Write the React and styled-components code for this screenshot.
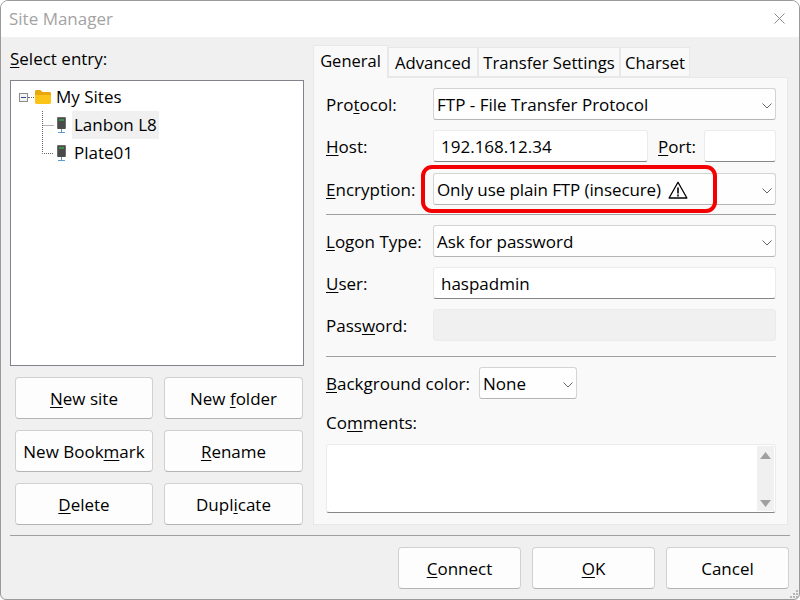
import React from 'react';
import styled, { createGlobalStyle } from 'styled-components';

const GlobalStyle = createGlobalStyle`
  html, body { margin: 0; padding: 0; background: #fff; }
  * { box-sizing: border-box; }
  u { text-underline-offset: 2px; text-decoration-thickness: 1px; }
`;

const Window = styled.div`
  position: relative;
  width: 800px;
  height: 600px;
  display: flex;
  flex-direction: column;
  overflow: hidden;
  background: #f0f0f0;
  border: 1px solid #9a9a9a;
  border-radius: 8px 8px 6px 6px;
  font-family: "Open Sans", "Noto Sans", sans-serif;
  font-size: 17px;
  color: #000;
`;

const TitleBar = styled.div`
  height: 36px;
  flex: none;
  display: flex;
  align-items: center;
  justify-content: space-between;
  padding: 0 14px 2px 8px;
  background: #fff;
  color: #a3a3a3;
  font-size: 17px;
`;

const Main = styled.div`
  display: flex;
  height: 488px;
  flex: none;
  padding-left: 9px;
`;

const LeftPane = styled.div`
  width: 294px;
  display: flex;
  flex-direction: column;
`;

const EntryLabel = styled.div`
  height: 43px;
  display: flex;
  align-items: center;
`;

const Tree = styled.div`
  height: 286px;
  padding: 2px 0 0 8px;
  background: #fff;
  border: 1px solid #82828c;
`;

const TreeRow = styled.div`
  height: 28px;
  display: flex;
  align-items: center;
  padding-left: ${(props) => props.$indent}px;
`;

const Expander = styled.span`
  width: 9px;
  height: 9px;
  display: flex;
  align-items: center;
  justify-content: center;
  background: #f4f4f4;
  border: 1px solid #8c8c8c;
  &::after {
    content: '';
    width: 5px;
    height: 1px;
    background: #2b4f9e;
  }
`;

const DotLine = styled.span`
  width: 6px;
  margin-right: 1px;
  border-top: 1px dotted #666;
`;

const EntryName = styled.span`
  height: 28px;
  line-height: 27px;
  margin-left: ${(props) => props.$gap}px;
  padding: 0 2px;
  background: ${(props) => (props.$selected ? '#f0f0f0' : 'transparent')};
`;

const ButtonGrid = styled.div`
  display: grid;
  grid-template-columns: 138px 139px;
  grid-auto-rows: 42px;
  gap: 11px;
  margin-top: 11px;
  padding-left: 5px;
`;

const PushButton = styled.div`
  display: flex;
  align-items: center;
  justify-content: center;
  background: #fdfdfd;
  border: 1px solid #d0d0d0;
  border-bottom-color: #b4b4b4;
  border-radius: 4px;
  white-space: nowrap;
`;

const RightPane = styled.div`
  width: 475px;
  margin-left: 9px;
  display: flex;
  flex-direction: column;
`;

const TabStrip = styled.div`
  height: 40px;
  flex: none;
  display: flex;
  align-items: flex-end;
`;

const Tab = styled.div`
  width: ${(props) => props.$width}px;
  height: ${(props) => (props.$active ? 33 : 30)}px;
  display: flex;
  align-items: center;
  justify-content: center;
  padding: ${(props) => (props.$active ? '0 0 4px' : '1px 0 0')};
  margin-bottom: ${(props) => (props.$active ? -1 : 0)}px;
  background: #f9f9f9;
  border: 1px solid #e8e8e8;
  border-bottom: ${(props) => (props.$active ? 'none' : '1px solid #e8e8e8')};
  position: relative;
  font-size: ${(props) => (props.$active ? 16.5 : 16.7)}px;
  white-space: nowrap;
`;

const Panel = styled.div`
  height: 448px;
  padding: 10px 11px 0 12px;
  background: #f9f9f9;
  border: 1px solid #e8e8e8;
`;

const FormRow = styled.div`
  display: flex;
  align-items: center;
  height: 32px;
  margin-bottom: ${(props) => props.$gap ?? 10}px;
`;

const RowLabel = styled.div`
  width: ${(props) => props.$width ?? 107}px;
  flex: none;
  white-space: nowrap;
`;

const Combo = styled.div`
  flex: ${(props) => (props.$width ? 'none' : 1)};
  width: ${(props) => (props.$width ? `${props.$width}px` : 'auto')};
  height: 32px;
  display: flex;
  align-items: center;
  justify-content: space-between;
  padding: 1px 0 0 3px;
  background: #fefefe;
  border: 1px solid #d4d4d4;
  border-bottom-color: #b4b4b4;
  border-radius: 3px;
  white-space: nowrap;
`;

const ComboValue = styled.span`
  display: flex;
  align-items: center;
  gap: 7px;
  letter-spacing: ${(props) => (props.$tight ? '-0.1px' : 'normal')};
`;

const TextInput = styled.div`
  flex: ${(props) => (props.$width ? 'none' : 1)};
  width: ${(props) => (props.$width ? `${props.$width}px` : 'auto')};
  height: 32px;
  display: flex;
  align-items: center;
  padding: 0 7px;
  background: ${(props) => (props.$disabled ? '#f0f0f0' : '#fff')};
  border: 1px solid #ebebeb;
  border-bottom-color: ${(props) => (props.$disabled ? '#ebebeb' : '#868686')};
  border-radius: 3px;
`;

const PortLabel = styled.div`
  width: 56px;
  flex: none;
  padding-left: 10px;
`;

const Separator = styled.div`
  height: 1px;
  background: #a0a0a0;
  margin: ${(props) => props.$top}px 0 10px;
`;

const CommentsLabel = styled.div`
  height: 22px;
  margin-top: 12px;
  display: flex;
  align-items: center;
`;

const CommentsBox = styled.div`
  height: 69px;
  margin-top: 11px;
  padding: 1px;
  display: flex;
  justify-content: flex-end;
  background: #fff;
  border: 1px solid #ebebeb;
  border-bottom-color: #868686;
  border-radius: 3px;
`;

const ScrollTrack = styled.div`
  width: 17px;
  display: flex;
  flex-direction: column;
  justify-content: space-between;
  align-items: center;
  padding: 6px 0 4px;
  background: #f0f0f0;
`;

const FooterRule = styled.div`
  height: 1px;
  margin: 10px 9px 0 9px;
  background: #a0a0a0;
`;

const Footer = styled.div`
  display: grid;
  grid-template-columns: repeat(3, 123px);
  grid-auto-rows: 42px;
  gap: 11px;
  justify-content: end;
  margin-top: 11px;
  padding-right: 10px;
`;

const Highlight = styled.div`
  position: absolute;
  left: 420px;
  top: 164px;
  width: 296px;
  height: 48px;
  border: 4px solid #f50000;
  border-radius: 11px;
  pointer-events: none;
`;

const Grip = styled.svg`
  position: absolute;
  right: 0;
  bottom: 0;
`;

const Chevron = () => (
  <svg width="16" height="16" viewBox="0 0 16 16" fill="none">
    <path d="M3.5 6.5L8 11l4.5-4.5" stroke="#666" strokeWidth="1" />
  </svg>
);

const Folder = () => (
  <svg width="16" height="14" viewBox="0 0 16 14">
    <path d="M0 1.5C0 .7.6 0 1.4 0h4l2 2h7c.9 0 1.6.6 1.6 1.5V6H0z" fill="#e8a80c" />
    <path d="M0 5h16v7.5c0 .8-.7 1.5-1.5 1.5h-13C.7 14 0 13.3 0 12.5z" fill="#fcc419" />
  </svg>
);

const Guide = ({ last }) => (
  <svg width="14" height="28" viewBox="0 0 14 28" fill="none">
    <path
      d={last ? 'M.5 0v14.5H12' : 'M.5 0v28M.5 14.5H12'}
      stroke="#666"
      strokeDasharray="1 1"
    />
  </svg>
);

const ServerIcon = () => (
  <svg width="11" height="17" viewBox="0 0 11 17">
    <rect x="1" y="0" width="9" height="12" rx="1" fill="#6e6e6e" />
    <rect x="2" y="1" width="7" height="11" fill="#4a4a4a" />
    <rect x="3" y="2" width="5" height="2" fill="#3c8f46" />
    <rect x="5" y="12" width="1" height="3" fill="#6a8fae" />
    <rect x="2" y="15" width="7" height="1" fill="#5b9bd0" />
  </svg>
);

const WarningIcon = () => (
  <svg width="20" height="18" viewBox="0 0 20 18" fill="none">
    <path d="M10 1.2L18.9 17H1.1z" stroke="#000" strokeWidth="1.3" strokeLinejoin="round" />
    <path d="M10 6.5v6" stroke="#000" strokeWidth="1.6" />
    <path d="M10 13.6v1.8" stroke="#000" strokeWidth="1.6" />
  </svg>
);

const CloseIcon = () => (
  <svg width="11" height="11" viewBox="0 0 11 11">
    <path d="M.5.5l10 10M10.5.5l-10 10" stroke="#8a8a8a" strokeWidth="1" />
  </svg>
);

const ScrollArrow = ({ up }) => (
  <svg width="11" height="7" viewBox="0 0 11 7">
    <path d={up ? 'M5.5 0L11 7H0z' : 'M5.5 7L11 0H0z'} fill="#a0a0a0" />
  </svg>
);

const tabs = [
  { name: 'General', width: 75, active: true },
  { name: 'Advanced', width: 90 },
  { name: 'Transfer Settings', width: 142 },
  { name: 'Charset', width: 70 },
];

export default function App() {
  return (
    <>
      <GlobalStyle />
      <Window>
        <TitleBar>
          <span>Site Manager</span>
          <CloseIcon />
        </TitleBar>
        <Main>
          <LeftPane>
            <EntryLabel>
              <span><u>S</u>elect entry:</span>
            </EntryLabel>
            <Tree>
              <TreeRow $indent={0}>
                <Expander />
                <DotLine />
                <Folder />
                <EntryName $gap={3}>My Sites</EntryName>
              </TreeRow>
              <TreeRow $indent={23}>
                <Guide />
                <ServerIcon />
                <EntryName $gap={5} $selected>Lanbon L8</EntryName>
              </TreeRow>
              <TreeRow $indent={23}>
                <Guide last />
                <ServerIcon />
                <EntryName $gap={5}>Plate01</EntryName>
              </TreeRow>
            </Tree>
            <ButtonGrid>
              <PushButton><span><u>N</u>ew site</span></PushButton>
              <PushButton><span>New <u>f</u>older</span></PushButton>
              <PushButton><span>New Book<u>m</u>ark</span></PushButton>
              <PushButton><span><u>R</u>ename</span></PushButton>
              <PushButton><span><u>D</u>elete</span></PushButton>
              <PushButton><span>Dupl<u>i</u>cate</span></PushButton>
            </ButtonGrid>
          </LeftPane>
          <RightPane>
            <TabStrip>
              {tabs.map((tab) => (
                <Tab key={tab.name} $width={tab.width} $active={tab.active}>{tab.name}</Tab>
              ))}
            </TabStrip>
            <Panel>
              <FormRow>
                <RowLabel>Pro<u>t</u>ocol:</RowLabel>
                <Combo>
                  <ComboValue>FTP - File Transfer Protocol</ComboValue>
                  <Chevron />
                </Combo>
              </FormRow>
              <FormRow $gap={11}>
                <RowLabel><u>H</u>ost:</RowLabel>
                <TextInput $width={215}>192.168.12.34</TextInput>
                <PortLabel><u>P</u>ort:</PortLabel>
                <TextInput />
              </FormRow>
              <FormRow $gap={0}>
                <RowLabel><u>E</u>ncryption:</RowLabel>
                <Combo>
                  <ComboValue $tight>Only use plain FTP (insecure) <WarningIcon /></ComboValue>
                  <Chevron />
                </Combo>
              </FormRow>
              <Separator $top={9} />
              <FormRow>
                <RowLabel><u>L</u>ogon Type:</RowLabel>
                <Combo>
                  <ComboValue>Ask for password</ComboValue>
                  <Chevron />
                </Combo>
              </FormRow>
              <FormRow>
                <RowLabel><u>U</u>ser:</RowLabel>
                <TextInput>haspadmin</TextInput>
              </FormRow>
              <FormRow $gap={0}>
                <RowLabel>Pass<u>w</u>ord:</RowLabel>
                <TextInput $disabled />
              </FormRow>
              <Separator $top={15} />
              <FormRow $gap={0}>
                <RowLabel $width={153}><u>B</u>ackground color:</RowLabel>
                <Combo $width={98}>
                  <ComboValue>None</ComboValue>
                  <Chevron />
                </Combo>
              </FormRow>
              <CommentsLabel>
                <span>Co<u>m</u>ments:</span>
              </CommentsLabel>
              <CommentsBox>
                <ScrollTrack>
                  <ScrollArrow up />
                  <ScrollArrow />
                </ScrollTrack>
              </CommentsBox>
            </Panel>
          </RightPane>
        </Main>
        <FooterRule />
        <Footer>
          <PushButton><span><u>C</u>onnect</span></PushButton>
          <PushButton><span><u>O</u>K</span></PushButton>
          <PushButton>Cancel</PushButton>
        </Footer>
        <Highlight />
        <Grip width="10" height="10" viewBox="0 0 10 10">
          <path d="M7 1h2v2H7zM4 4h2v2H4zM7 4h2v2H7zM1 7h2v2H1zM4 7h2v2H4zM7 7h2v2H7z" fill="#b5b5b5" />
        </Grip>
      </Window>
    </>
  );
}
